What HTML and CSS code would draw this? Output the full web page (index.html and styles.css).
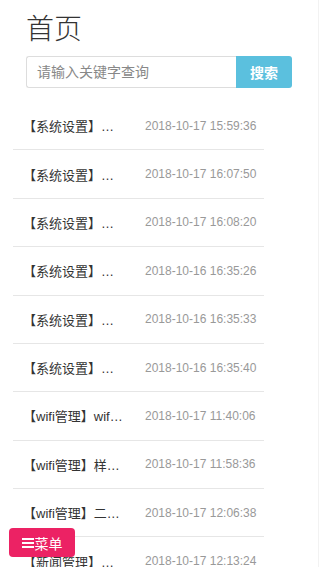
FILE: index.html
```html
<!DOCTYPE html>
<html lang="zh-CN">
<head>
<meta charset="utf-8">
<title>首页</title>
<link rel="stylesheet" href="styles.css">
</head>
<body>
<div class="page">
  <header class="header">
    <h1 class="title">首页</h1>
    <form class="search">
      <input class="search-input" type="text" placeholder="请输入关键字查询">
      <button class="search-btn" type="button">搜索</button>
    </form>
  </header>
  <ul class="list">
    <li class="row"><span class="row-title">【系统设置】修改网站基本配置</span><span class="row-date">2018-10-17 15:59:36</span></li>
    <li class="row"><span class="row-title">【系统设置】修改网站基本配置</span><span class="row-date">2018-10-17 16:07:50</span></li>
    <li class="row"><span class="row-title">【系统设置】修改网站基本配置</span><span class="row-date">2018-10-17 16:08:20</span></li>
    <li class="row"><span class="row-title">【系统设置】修改管理员密码</span><span class="row-date">2018-10-16 16:35:26</span></li>
    <li class="row"><span class="row-title">【系统设置】修改管理员密码</span><span class="row-date">2018-10-16 16:35:33</span></li>
    <li class="row"><span class="row-title">【系统设置】修改管理员密码</span><span class="row-date">2018-10-16 16:35:40</span></li>
    <li class="row"><span class="row-title">【wifi管理】wifi设备添加</span><span class="row-date">2018-10-17 11:40:06</span></li>
    <li class="row"><span class="row-title">【wifi管理】样式修改</span><span class="row-date">2018-10-17 11:58:36</span></li>
    <li class="row"><span class="row-title">【wifi管理】二维码生成</span><span class="row-date">2018-10-17 12:06:38</span></li>
    <li class="row"><span class="row-title">【新闻管理】新增新闻</span><span class="row-date">2018-10-17 12:13:24</span></li>
    <li class="row"><span class="row-title">【新闻管理】编辑新闻</span><span class="row-date">2018-10-17 12:20:11</span></li>
  </ul>
  <button class="menu-btn" type="button">
    <span class="menu-icon"><i></i><i></i><i></i></span>菜单
  </button>
</div>
</body>
</html>
```
FILE: styles.css
```css
html, body {
  margin: 0;
  padding: 0;
  background: #fff;
  overflow: hidden;
}
body {
  font-family: "Liberation Sans", "Noto Sans CJK SC", sans-serif;
  color: #333;
}
.page {
  width: 319px;
  min-height: 567px;
  box-sizing: border-box;
  border-right: 1px solid #f2f2f2;
}
.header {
  padding: 0 26px;
}
.title {
  margin: 0;
  padding-top: 9px;
  font-size: 28px;
  line-height: 36px;
  font-weight: 300;
  color: #333;
  font-family: "Noto Sans CJK SC", sans-serif;
}
.search {
  display: flex;
  margin: 11px 0 0;
  height: 32px;
}
.search-input {
  flex: 1;
  min-width: 0;
  height: 32px;
  box-sizing: border-box;
  border: 1px solid #ddd;
  border-right: none;
  border-radius: 3px 0 0 3px;
  padding: 0 10px;
  font-size: 14px;
  font-family: "Liberation Sans", "Noto Sans CJK SC", sans-serif;
  color: #333;
  outline: none;
}
.search-input::placeholder {
  color: #888;
}
.search-btn {
  width: 56px;
  height: 32px;
  border: none;
  border-radius: 0 3px 3px 0;
  background: #5bc0de;
  color: #fff;
  font-size: 14px;
  font-weight: bold;
  font-family: "Noto Sans CJK SC", sans-serif;
  padding: 0;
}
.list {
  list-style: none;
  margin: 14px 0 0 13px;
  padding: 0;
  width: 251px;
}
.row {
  display: flex;
  align-items: center;
  height: 48.375px;
  box-sizing: border-box;
  border-bottom: 1px solid #e6e6e6;
  padding: 0 9px 0 10px;
}
.row-title {
  width: 101px;
  flex: none;
  white-space: nowrap;
  overflow: hidden;
  text-overflow: ellipsis;
  font-size: 13px;
  color: #333;
}
.row-date {
  margin-left: 21px;
  font-size: 12px;
  color: #999;
  white-space: nowrap;
}
.menu-btn {
  position: fixed;
  left: 9px;
  bottom: 10px;
  width: 66px;
  height: 29px;
  border: none;
  border-radius: 4px;
  background: #ec2264;
  color: #fff;
  font-size: 14px;
  font-family: "Noto Sans CJK SC", sans-serif;
  display: flex;
  align-items: center;
  justify-content: center;
  padding: 0;
}
.menu-icon {
  display: flex;
  flex-direction: column;
  justify-content: space-between;
  width: 12px;
  height: 10px;
  margin-right: 1px;
}
.menu-icon i {
  display: block;
  height: 2px;
  background: #fff;
}
```
